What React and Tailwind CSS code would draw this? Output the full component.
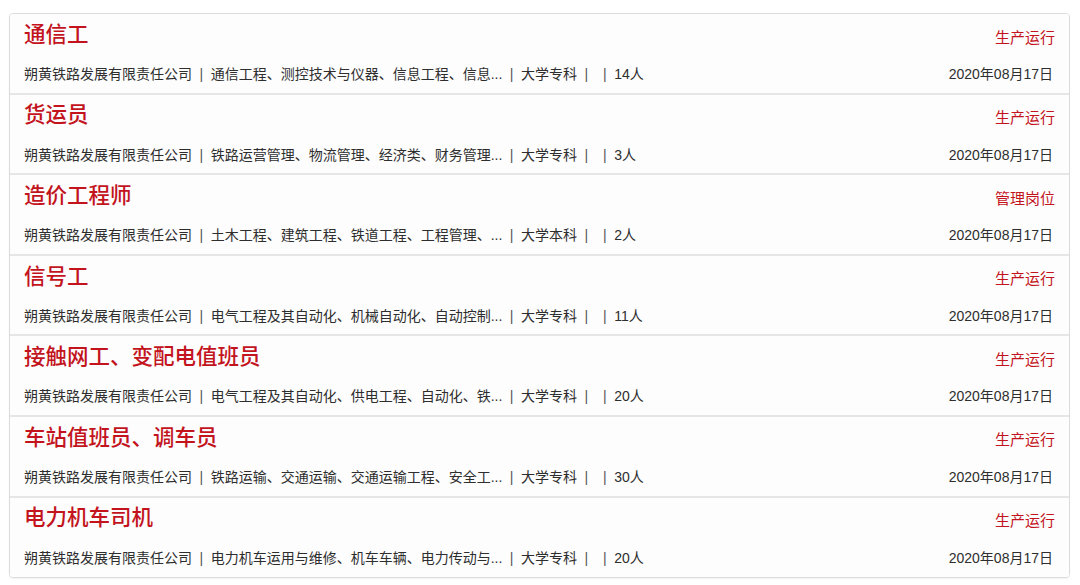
import React from 'react';

const jobs = [
  { title: '通信工', type: '生产运行', major: '通信工程、测控技术与仪器、信息工程、信息...', edu: '大学专科', num: '14人' },
  { title: '货运员', type: '生产运行', major: '铁路运营管理、物流管理、经济类、财务管理...', edu: '大学专科', num: '3人' },
  { title: '造价工程师', type: '管理岗位', major: '土木工程、建筑工程、铁道工程、工程管理、...', edu: '大学本科', num: '2人' },
  { title: '信号工', type: '生产运行', major: '电气工程及其自动化、机械自动化、自动控制...', edu: '大学专科', num: '11人' },
  { title: '接触网工、变配电值班员', type: '生产运行', major: '电气工程及其自动化、供电工程、自动化、铁...', edu: '大学专科', num: '20人' },
  { title: '车站值班员、调车员', type: '生产运行', major: '铁路运输、交通运输、交通运输工程、安全工...', edu: '大学专科', num: '30人' },
  { title: '电力机车司机', type: '生产运行', major: '电力机车运用与维修、机车车辆、电力传动与...', edu: '大学专科', num: '20人' },
];

const Sep = () => <span className="mx-[7.5px] text-[#555]">|</span>;

const JobRow = ({ job, last }) => (
  <div className={`flex flex-col px-[14px] bg-[#fdfdfd] ${last ? 'h-[79px]' : 'h-[80.6px] border-b-2 border-[#e6e6e6]'}`}>
    <div className="flex items-center justify-between pt-[7px] h-[36px]">
      <span className="text-[21.5px] leading-none text-[#c3141d] font-medium">{job.title}</span>
      <span className="text-[15px] leading-none text-[#c3141d] mt-[3px]">{job.type}</span>
    </div>
    <div className="flex items-center justify-between mt-[17px] text-[14px] leading-none text-[#2e2e2e]">
      <div className="flex items-center whitespace-nowrap">
        <span>朔黄铁路发展有限责任公司</span>
        <Sep />
        <span>{job.major}</span>
        <Sep />
        <span>{job.edu}</span>
        <Sep />
        <Sep />
        <span>{job.num}</span>
      </div>
      <span className="pr-[2px]">2020年08月17日</span>
    </div>
  </div>
);

export default function App() {
  return (
    <div
      className="w-[1080px] h-[585px] bg-white pt-[13px] pl-[9px] pr-[10px]"
      style={{ fontFamily: '"Liberation Sans", "Noto Sans CJK SC", sans-serif' }}
    >
      <div className="border border-[#dcdcdc] rounded-[4px] shadow-[0_1px_2px_rgba(0,0,0,0.06)] overflow-hidden">
        {jobs.map((job, i) => (
          <JobRow key={i} job={job} last={i === jobs.length - 1} />
        ))}
      </div>
    </div>
  );
}
